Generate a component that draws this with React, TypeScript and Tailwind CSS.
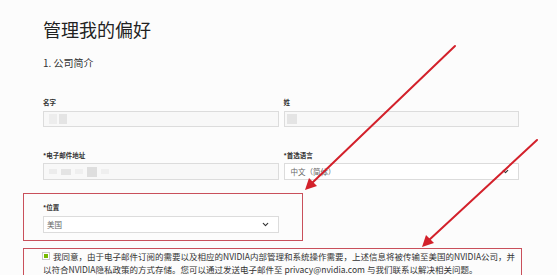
import { ChevronDown } from 'lucide-react'

const font = { fontFamily: '"Noto Sans CJK SC", "Noto Sans", sans-serif' }

function Label({ children }: { children: React.ReactNode }) {
  return <div className="text-[6.5px] leading-[10px] font-bold text-[#333]">{children}</div>
}

function Blur({ w, h, tone = 'bg-[#e4e4e4]' }: { w: number; h: number; tone?: string }) {
  return <span className={`inline-block ${tone}`} style={{ width: w, height: h }} />
}

function Arrows() {
  // red annotation arrows drawn over the form
  return (
    <svg className="pointer-events-none absolute inset-0" width="557" height="275">
      <g stroke="#d3212b" strokeWidth="2" strokeLinecap="round">
        <line x1="455" y1="46" x2="311" y2="184" />
        <line x1="537" y1="140" x2="428" y2="241" />
      </g>
      <g fill="#d3212b">
        <polygon points="305,190 309,178 317,186" />
        <polygon points="422,247 426,235 434,243" />
      </g>
    </svg>
  )
}

export default function App() {
  return (
    <div className="relative h-[275px] w-[557px] overflow-hidden bg-[#fcfcfc]" style={font}>
      <div className="pl-[43px] pt-[16px]">
        <h1 className="text-[18px] leading-[26px] text-[#222]">管理我的偏好</h1>
        <p className="mt-[14px] text-[10px] leading-[14px] text-[#333]">1. 公司简介</p>

        <div className="mt-[27px] grid w-[476px] grid-cols-2 gap-x-[5px]">
          <div>
            <Label>名字</Label>
            <div className="mt-[4px] flex h-[16px] items-center gap-[2px] border border-[#dcdcdc] bg-[#f8f8f8] pl-[5px]">
              <Blur w={8} h={10} tone="bg-[#ededed]" />
              <Blur w={8} h={10} />
            </div>
          </div>
          <div>
            <Label>姓</Label>
            <div className="mt-[4px] flex h-[16px] items-center border border-[#dcdcdc] bg-[#f8f8f8] pl-[2px]">
              <Blur w={10} h={10} />
            </div>
          </div>

          <div className="mt-[23px]">
            <Label>*电子邮件地址</Label>
            <div className="mt-[3px] flex h-[17px] items-center gap-[4px] border border-[#dcdcdc] bg-[#f8f8f8] pl-[5px]">
              <Blur w={8} h={5} tone="bg-[#ececec]" />
              <Blur w={10} h={6} />
              <Blur w={8} h={5} tone="bg-[#efefef]" />
              <Blur w={10} h={10} tone="bg-[#dedede]" />
              <Blur w={8} h={5} tone="bg-[#efefef]" />
            </div>
          </div>
          <div className="mt-[23px]">
            <Label>*首选语言</Label>
            <div className="mt-[3px] flex h-[17px] items-center justify-between border border-[#dcdcdc] bg-white pl-[6px] pr-[8px]">
              <span className="text-[7.5px] text-[#666]">中文（简体）</span>
              <ChevronDown size={9} strokeWidth={3} className="text-[#333]" />
            </div>
          </div>
        </div>

        <div className="ml-[-20px] mt-[13px] w-[280px] border-[1.5px] border-[#c9505b] pb-[7px] pl-[19px] pr-[23px] pt-[8px]">
          <Label>*位置</Label>
          <div className="mt-[4px] flex h-[17px] items-center justify-between border border-[#dcdcdc] bg-white pl-[3px] pr-[8px]">
            <span className="text-[7.5px] text-[#666]">美国</span>
            <ChevronDown size={9} strokeWidth={3} className="text-[#333]" />
          </div>
        </div>

        <div className="ml-[-20px] mt-[7px] h-[40px] w-[499px] border-[1.5px] border-[#c9505b] pl-[19px] pt-[1px]">
          <p className="whitespace-nowrap text-[8.5px] leading-[12.5px] text-[#333]">
            <span className="mr-[4px] inline-block h-[6px] w-[6px] border border-white bg-[#76b900] align-[1px] outline outline-[0.5px] outline-[#c8c8c8]" />
            我同意，由于电子邮件订阅的需要以及相应的NVIDIA内部管理和系统操作需要，上述信息将被传输至美国的NVIDIA公司，并
            <br />
            以符合NVIDIA隐私政策的方式存储。您可以通过发送电子邮件至 privacy@nvidia.com 与我们联系以解决相关问题。
          </p>
        </div>
      </div>
      <Arrows />
    </div>
  )
}
